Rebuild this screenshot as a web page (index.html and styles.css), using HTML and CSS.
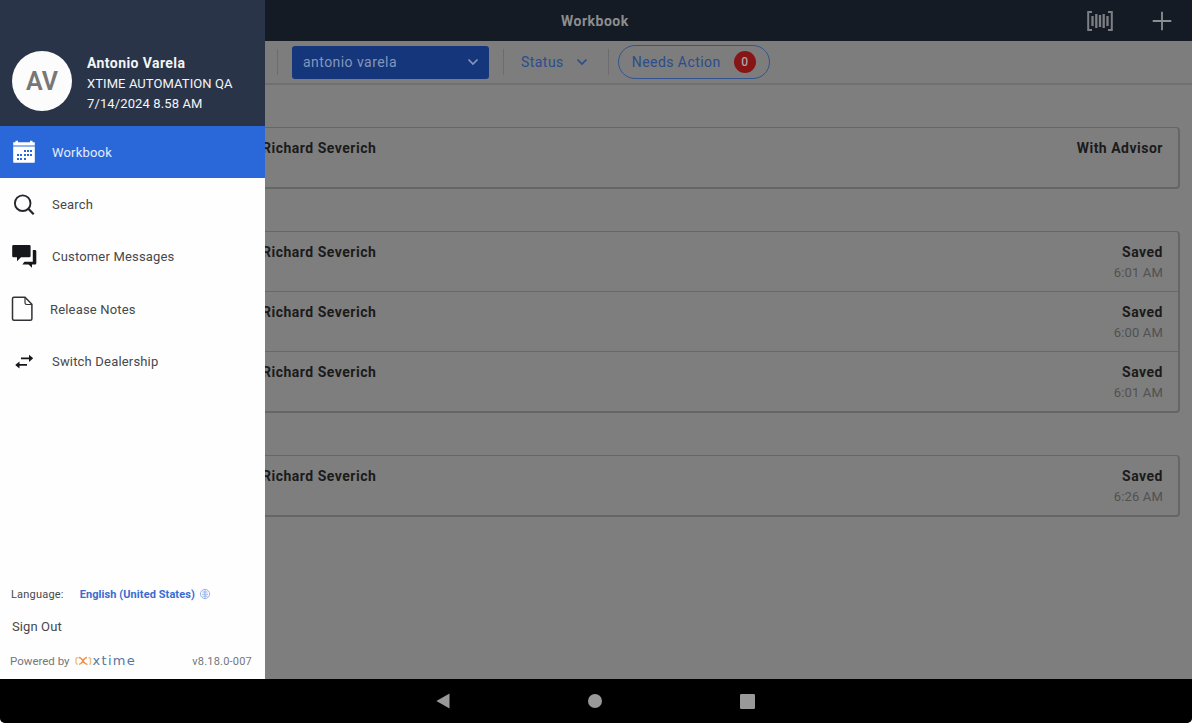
FILE: index.html
```html
<!DOCTYPE html>
<html lang="en">
<head>
<meta charset="utf-8">
<title>Workbook</title>
<link rel="stylesheet" href="styles.css">
</head>
<body>
<div class="device">
  <aside class="drawer">
    <header class="profile">
      <div class="avatar"><span>AV</span></div>
      <div class="profile-text">
        <strong>Antonio Varela</strong>
        <span class="dealer">XTIME AUTOMATION QA</span>
        <span class="date">7/14/2024 8.58 AM</span>
      </div>
    </header>
    <nav class="menu">
      <a class="item active">
        <svg viewBox="0 0 24 24" width="24" height="24"><path fill="#fff" d="M1.200 2.200h2.300V.8H6v1.400h12V.8h2.500v1.400h2.300v3.300H1.200zM1.200 6.500h21.600V22q0 .7-.7.7H1.900q-.7 0-.7-.7z"/><path fill="#2a68da" d="M12 10h2v2h-2zM15 10h2v2h-2zM18 10h2v2h-2zM5 14h2v2H5zM8 14h2v2H8zM12 14h2v2h-2zM15 14h2v2h-2zM18 14h2v2h-2zM5 18h2v2H5zM8 18h2v2H8zM12 18h2v2h-2z"/></svg>
        <span>Workbook</span>
      </a>
      <a class="item">
        <svg viewBox="0 0 24 24" width="24" height="24" fill="none" stroke="#25272b"><circle cx="10.700" cy="10.200" r="7.800" stroke-width="1.900"/><path stroke-width="2.300" d="m16.300 15.800 5.400 5.400"/></svg>
        <span>Search</span>
      </a>
      <a class="item">
        <svg viewBox="0 0 25 24" width="25" height="24" fill="#15171c"><path d="M1.500 0h15.800q1.300 0 1.300 1.300V11q0 1.300-1.300 1.300H9L5 16.300v-4H1.500Q.2 12.300.2 11V1.300Q.2 0 1.500 0zM20.800 5H23q1.300 0 1.300 1.200v12.100q0 1.200-1.300 1.200h-3v3.300l-3.500-3.300h-6.200l2.200-2.800h8.300z"/></svg>
        <span class="tight">Customer Messages</span>
      </a>
      <a class="item note">
        <svg viewBox="0 0 24 26" width="24" height="26" fill="none" stroke="#303236" stroke-width="1.500"><path d="M4 1.300h11l6.900 7v14.400q0 1.500-1.500 1.500H4q-1.500 0-1.500-1.500V2.800q0-1.500 1.500-1.500z"/><path stroke-width="1.200" d="M15 1.500v5.300q0 1.700 1.700 1.700h5.200"/></svg>
        <span>Release Notes</span>
      </a>
      <a class="item">
        <svg viewBox="0 0 24 24" width="24" height="24" fill="#15171c"><path d="M9 7.400h8V4.700l4.200 3.600-4.200 3.600V9.200H9zM15 14h-7.500v-2.600L3.200 15l4.300 3.600v-2.800H15z"/></svg>
        <span>Switch Dealership</span>
      </a>
    </nav>
    <footer class="drawer-foot">
      <div class="language"><span>Language:</span><b>English (United States)</b>
        <svg viewBox="0 0 12 12" width="12" height="12" fill="none" stroke="#8eabe8" stroke-width=".9"><circle cx="6" cy="6" r="4.600"/><path d="M3.500 4h5M3 6.200h6M3.500 8.200h5M6 2v8"/></svg>
      </div>
      <div class="signout"><span>Sign Out</span></div>
      <div class="powered"><span>Powered by</span>
        <span class="logo"><svg viewBox="0 0 17 10" width="17" height="10" fill="none" stroke-width="1.400"><path stroke="#f1bd84" d="M3.500 1.700H2.300Q1 1.700 1 3v3.500q0 1.700 1.800 1.700M13.500 1.700h.7q1.300 0 1.300 1.300v4q0 1.200-1.300 1.200"/><path stroke="#ef9550" d="M4 1.500q2 0 4 3.400t4.500 3.500M12 1.500q-2 0-4 3.400T4 8.400"/></svg><span>xtime</span></span>
        <span class="version">v8.18.0-007</span>
      </div>
    </footer>
  </aside>

  <main class="main">
    <header class="topbar">
      <h1>Workbook</h1>
      <div class="actions">
        <svg viewBox="0 0 26 20" width="26" height="20" fill="none" stroke="#7c7f83"><path stroke-width="2" d="M5 1H1.200v18H5M21 1h3.800v18H21"/><path stroke-width="2.300" d="M5.500 5v10M9.300 3v14M13 4v12M16.700 3v14M20.500 5v10"/></svg>
        <svg viewBox="0 0 20 20" width="20" height="20" stroke="#8c8f92" stroke-width="1.800"><path d="M10 .7v18.600M.7 10h18.600"/></svg>
      </div>
    </header>
    <div class="filters">
      <div class="select"><span>antonio varela</span><svg viewBox="0 0 12 8" width="12" height="8"><path d="m1.500 1.500 4.500 4.500 4.500-4.500"/></svg></div>
      <div class="status"><span>Status</span><svg viewBox="0 0 12 8" width="12" height="8"><path d="m1.500 1.500 4.500 4.500 4.500-4.500"/></svg></div>
      <div class="needs"><span>Needs Action</span><i>0</i></div>
    </div>
    <div class="lists">
      <section class="card">
        <article><b>Richard Severich</b><div class="state"><b>With Advisor</b></div></article>
      </section>
      <section class="card">
        <article><b>Richard Severich</b><div class="state"><b>Saved</b><span>6:01 AM</span></div></article>
        <article><b>Richard Severich</b><div class="state"><b>Saved</b><span>6:00 AM</span></div></article>
        <article><b>Richard Severich</b><div class="state"><b>Saved</b><span>6:01 AM</span></div></article>
      </section>
      <section class="card">
        <article><b>Richard Severich</b><div class="state"><b>Saved</b><span>6:26 AM</span></div></article>
      </section>
    </div>
  </main>

  <footer class="system">
    <svg viewBox="0 0 14 16" width="14" height="16"><path d="M13.500.4v15.200L.4 8z"/></svg>
    <svg viewBox="0 0 14 14" width="14" height="14"><circle cx="7" cy="7" r="7"/></svg>
    <svg viewBox="0 0 15 15" width="15" height="15"><rect width="15" height="15" rx="1.200"/></svg>
  </footer>
</div>
</body>
</html>
```
FILE: styles.css
```css
* { box-sizing: border-box; }
body { margin: 0; background: #fff; font-family: Roboto, "Liberation Sans", sans-serif; font-size: 13px; }
svg { display: block; flex: none; }
span, b, strong { white-space: nowrap; }
.device { width: 1192px; height: 723px; display: grid; grid-template: 679px 44px / 265px 1fr; overflow: hidden; border-radius: 0 0 5px 5px; background: #7e7e7e; }

.drawer { position: relative; z-index: 1; background: #fefefe; display: flex; flex-direction: column; min-width: 0; color: #46484c; }
.profile { height: 126px; padding: 51px 0 0 12px; background: #293449; display: flex; gap: 15px; }
.avatar { width: 60px; height: 60px; border-radius: 50%; background: #fcfcfc; color: #777; display: flex; align-items: center; justify-content: center; font-size: 25px; font-weight: 600; }
.profile-text { display: flex; flex-direction: column; color: #f4f5f7; line-height: 20px; padding-top: 2px; }
.profile-text strong { font-size: 14px; letter-spacing: .42px; }
.dealer { font-size: 13px; letter-spacing: .08px; padding-top: 1px; }
.date { font-size: 13px; letter-spacing: .12px; }
.menu { display: flex; flex-direction: column; }
.item { height: 52.400px; padding-left: 12px; display: flex; align-items: center; gap: 16px; letter-spacing: .18px; }
.item .tight { margin-left: -1px; }
.active { background: #2a68da; color: #e4ecfb; }
.note { padding-left: 10px; }
.drawer-foot { margin-top: auto; height: 95px; }
.language { height: 20px; padding-left: 11px; display: flex; align-items: center; font-size: 11px; letter-spacing: .2px; }
.language b { margin-left: 16px; color: #3a6bd2; font-weight: 700; letter-spacing: .08px; }
.language svg { margin-left: 4px; }
.signout { height: 20px; margin-top: 13px; padding-left: 12px; line-height: 20px; font-size: 13px; letter-spacing: .1px; }
.powered { height: 20px; margin-top: 14px; padding: 0 13px 0 10px; display: flex; align-items: center; font-size: 11.500px; color: #74767a; }
.logo { display: flex; align-items: center; margin-left: 5px; color: #55789d; font-family: "DejaVu Sans", sans-serif; font-size: 13px; line-height: 12px; letter-spacing: 1.300px; gap: 1px; }
.version { margin-left: auto; font-size: 11px; letter-spacing: .2px; }

.main { min-width: 0; display: flex; flex-direction: column; }
.topbar { height: 41px; background: #141b24; display: flex; align-items: center; justify-content: space-between; padding: 0 20px 0 296px; }
.topbar h1 { margin: 0; font-size: 14px; font-weight: 700; color: #8c8e91; letter-spacing: .5px; }
.actions { display: flex; align-items: center; gap: 39px; }
.filters { height: 44px; flex: none; border-bottom: 2px solid #707070; display: flex; align-items: center; color: #2b4c8d; font-size: 14px; letter-spacing: .45px; background: #7d7d7d; }
.filters path { fill: none; stroke: currentColor; stroke-width: 1.700; }
.filters::before { content: ""; width: 1px; height: 26px; background: #6c6c6c; margin-left: 12px; }
.select { width: 197px; height: 33px; margin-left: 14px; padding: 0 10px 0 11px; display: flex; align-items: center; justify-content: space-between; color: #8496bb; background: #15367a; border-radius: 3px; }
.status { margin-left: 14px; height: 26px; padding: 0 20px 0 17px; border: solid #6c6c6c; border-width: 0 1px; display: flex; align-items: center; gap: 12px; }
.needs { margin-left: 9px; width: 152px; height: 34px; padding: 0 13px; border: 1px solid #34548f; border-radius: 17px; display: flex; align-items: center; justify-content: space-between; }
.needs i { width: 22px; height: 22px; border-radius: 50%; background: #881516; color: #a9a3a3; font-style: normal; font-weight: 500; font-size: 12px; letter-spacing: 0; line-height: 22px; text-align: center; }
.lists { padding: 42px 12px 0 0; display: flex; flex-direction: column; gap: 42px; }
.card { margin-left: -8px; border: 1px solid #666; border-right-width: 2px; border-bottom-width: 2px; border-radius: 4px; }
.card article { height: 59px; padding: 10px 15px 0 4px; display: flex; justify-content: space-between; color: #1b1b1b; font-size: 14px; letter-spacing: .5px; line-height: 20px; }
.card article + article { height: 60px; border-top: 1px solid #686868; }
.state { display: flex; flex-direction: column; align-items: flex-end; }
.state span { color: #515151; font-size: 13px; letter-spacing: .15px; line-height: 21px; }

.system { grid-column: 1 / 3; background: #000; display: flex; align-items: center; padding-left: 436px; gap: 138px; }
.system svg { fill: #999; }
```
